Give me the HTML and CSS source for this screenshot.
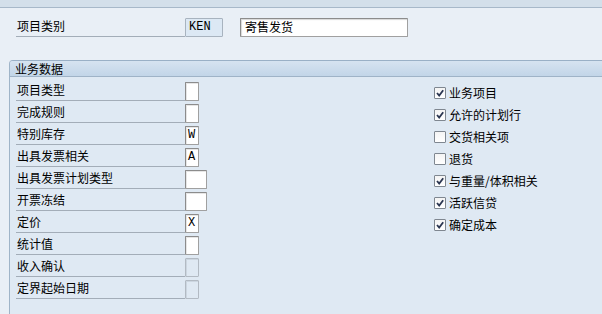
FILE: index.html
```html
<!DOCTYPE html>
<html lang="zh">
<head>
<meta charset="utf-8">
<link rel="stylesheet" href="styles.css">
</head>
<body>
<div class="topbar"></div>
<div class="head-area">
  <div class="row">
    <span class="label">项目类别</span>
    <span class="box code ro">KEN</span>
    <span class="box desc">寄售发货</span>
  </div>
</div>
<div class="group">
  <div class="group-title">业务数据</div>
  <div class="group-body">
    <div class="col-left">
      <div class="row"><span class="label">项目类型</span><span class="box w1"></span></div>
      <div class="row"><span class="label">完成规则</span><span class="box w1"></span></div>
      <div class="row"><span class="label">特别库存</span><span class="box w1">W</span></div>
      <div class="row"><span class="label">出具发票相关</span><span class="box w1">A</span></div>
      <div class="row"><span class="label">出具发票计划类型</span><span class="box w2"></span></div>
      <div class="row"><span class="label">开票冻结</span><span class="box w2"></span></div>
      <div class="row"><span class="label">定价</span><span class="box w1">X</span></div>
      <div class="row"><span class="label">统计值</span><span class="box w1"></span></div>
      <div class="row"><span class="label">收入确认</span><span class="box w1 dis"></span></div>
      <div class="row"><span class="label">定界起始日期</span><span class="box w1 dis"></span></div>
    </div>
    <div class="col-right">
      <div class="cb-row"><span class="cb on"><svg viewBox="0 0 10 10"><path d="M2 5 L4.2 7.6 L8.2 2.2"/></svg></span><span class="cb-text">业务项目</span></div>
      <div class="cb-row"><span class="cb on"><svg viewBox="0 0 10 10"><path d="M2 5 L4.2 7.6 L8.2 2.2"/></svg></span><span class="cb-text">允许的计划行</span></div>
      <div class="cb-row"><span class="cb"></span><span class="cb-text">交货相关项</span></div>
      <div class="cb-row"><span class="cb"></span><span class="cb-text">退货</span></div>
      <div class="cb-row"><span class="cb on"><svg viewBox="0 0 10 10"><path d="M2 5 L4.2 7.6 L8.2 2.2"/></svg></span><span class="cb-text">与重量/体积相关</span></div>
      <div class="cb-row"><span class="cb on"><svg viewBox="0 0 10 10"><path d="M2 5 L4.2 7.6 L8.2 2.2"/></svg></span><span class="cb-text">活跃信贷</span></div>
      <div class="cb-row"><span class="cb on"><svg viewBox="0 0 10 10"><path d="M2 5 L4.2 7.6 L8.2 2.2"/></svg></span><span class="cb-text">确定成本</span></div>
    </div>
  </div>
</div>
</body>
</html>
```

FILE: styles.css
```css
* { box-sizing: border-box; }
html, body { margin: 0; padding: 0; }
body {
  width: 602px;
  height: 314px;
  overflow: hidden;
  background: #e9eff6;
  font-family: "Noto Sans CJK SC", "Noto Sans", sans-serif;
  font-size: 12px;
  color: #000;
}
.topbar {
  height: 8px;
  background: #d3dfea;
  border-bottom: 1px solid #a7b8c9;
}
.head-area {
  height: 52px;
  padding: 10px 0 0 16px;
}
.row {
  display: flex;
  align-items: flex-end;
  height: 22px;
}
.head-area .row { height: 19px; }
.label {
  width: 169px;
  height: 19px;
  line-height: 15px;
  padding-left: 1px;
  border-bottom: 1px solid #a3adb8;
  white-space: nowrap;
}
.box {
  height: 19px;
  background: #fff;
  border: 1px solid #a0a0a0;
  border-top-color: #8c8c8c;
  border-left-color: #8c8c8c;
  border-radius: 1px;
  box-shadow: inset 1px 1px 0 #e6e6e6;
  font-family: "Liberation Mono", "Courier New", monospace;
  font-size: 12px;
  line-height: 17px;
  padding-left: 3px;
}
.box.ro {
  background: #dce8f4;
  box-shadow: none;
  border-color: #a8b3bf;
}
.box.code { width: 38px; }
.box.desc {
  width: 168px;
  margin-left: 17px;
  font-family: "Noto Sans CJK SC", sans-serif;
  line-height: 16px;
  padding-left: 4px;
  box-shadow: inset 1px 1px 1px #d8d8d8;
}
.box.w1 { width: 14px; padding-left: 2px; }
.box.w2 { width: 22px; }
.box.dis {
  background: #dfe9f3;
  border-color: #b2bac3;
  box-shadow: inset 1px 1px 0 #ccd6e0;
}
.group {
  margin-left: 9px;
  height: 254px;
  border-left: 1px solid #9fb4c8;
  border-top: 1px solid #9ab0c6;
  border-top-left-radius: 4px;
  background: #dfe9f3;
}
.group-title {
  height: 16px;
  line-height: 15px;
  padding-left: 5px;
  background: linear-gradient(#d6e3f0, #c2d5e8);
  border-bottom: 1px solid #9fb3c7;
  border-top-left-radius: 3px;
}
.group-body {
  display: flex;
  padding: 2px 0 0 6px;
}
.col-left {
  flex: 0 0 418px;
}
.col-right {
  display: flex;
  flex-direction: column;
}
.cb-row {
  height: 22px;
  display: flex;
  align-items: flex-end;
  padding-bottom: 2px;
}
.cb {
  width: 12px;
  height: 12px;
  border: 1px solid #7f8790;
  background: linear-gradient(#f4f4f4, #ffffff);
  border-radius: 1px;
  display: flex;
}
.cb svg {
  width: 10px;
  height: 10px;
  fill: none;
  stroke: #2a3550;
  stroke-width: 1.8;
}
.cb-text {
  margin-left: 3px;
  line-height: 12px;
  white-space: nowrap;
}
```
